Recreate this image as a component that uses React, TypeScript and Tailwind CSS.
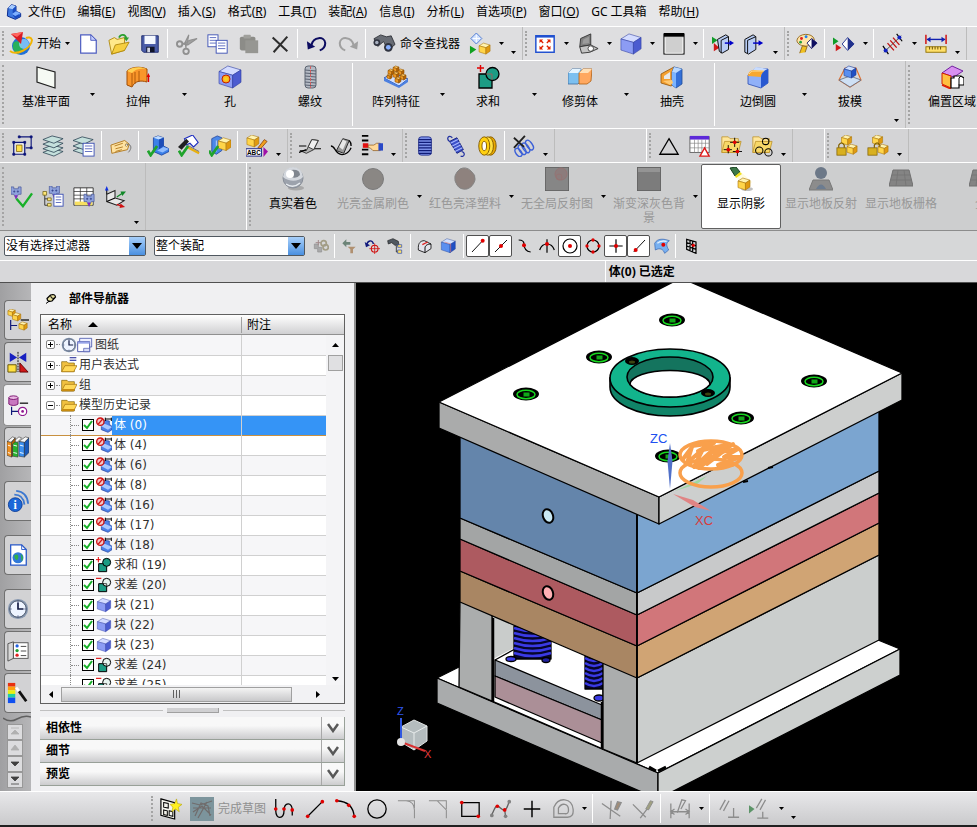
import type { ReactNode } from 'react';
import clsx from 'clsx';

/* ------------------------------- icon parts ------------------------------- */

function Cube({ x, y, s, c }: { x: number; y: number; s: number; c: 'blue' | 'gold' | 'violet' | 'orange' }) {
  const [top, front, side, line] = {
    blue: ['#cfe0ff', '#5a8ff0', '#1f4fc4', '#1c3c96'],
    gold: ['#fff3b0', '#ffd54a', '#e09a10', '#a87408'],
    violet: ['#d4dcff', '#8c9cf4', '#4c5cd0', '#2c3aa0'],
    orange: ['#ffc860', '#f09820', '#b86404', '#905000']
  }[c];
  const p = (pts: number[][]) => pts.map(([a, b]) => `${x + a * s},${y + b * s}`).join(' ');
  return (
    <g stroke={line} strokeWidth=".6" strokeLinejoin="round">
      <polygon fill={top} points={p([[0, .25], [.4, 0], [1, .18], [.62, .42]])} />
      <polygon fill={front} points={p([[0, .25], [.62, .42], [.62, 1], [0, .8]])} />
      <polygon fill={side} points={p([[.62, .42], [1, .18], [1, .74], [.62, 1]])} />
    </g>
  );
}

const Tick = ({ x = 0, y = 0 }: { x?: number; y?: number }) => (
  <path d={`M${x} ${y + 5}l3 5 7-10`} fill="none" stroke="#1fa32c" strokeWidth="3" />
);

const Dot = ({ x, y, r = 2 }: { x: number; y: number; r?: number }) => <circle cx={x} cy={y} r={r} fill="#e00000" />;

const Folder = () => (
  <g stroke="#b88c20" strokeWidth=".8">
    <path d="M2 2h7l2 2h9v15H2z" fill="#ffe69a" />
    <path d="M2 19l3-12h18l-3 12z" fill="#f8d868" />
  </g>
);

const Robot = ({ x, y }: { x: number; y: number }) => (
  <g transform={`translate(${x} ${y})`} stroke="#4c5a9c" strokeWidth=".8">
    <path d="M0 0h3v2h5V0h3v8H8l-2.500 5L3 8H0z" fill="#8fa2dc" />
    <circle cx="3.500" cy="5" r=".8" fill="#203080" />
    <circle cx="7.500" cy="5" r=".8" fill="#203080" />
    <path d="M4 9l1.500 5L7 9z" fill="#8a20c0" stroke="none" />
  </g>
);

const Page = ({ x, y, w = 9, h = 12 }: { x: number; y: number; w?: number; h?: number }) => (
  <g>
    <rect x={x} y={y} width={w} height={h} fill="#fff" stroke="#3c50b4" />
    <path d={`M${x + 2} ${y + 3}h${w - 4}m-${w - 4} 3h${w - 4}m-${w - 4} 3h${w - 4}`} stroke="#5868c0" />
  </g>
);

const stroke = { fill: 'none', stroke: '#000', strokeWidth: 1.4 };
const pale = { fill: 'none', stroke: '#8c8c8c', strokeWidth: 1.4 };

const ICONS: Record<string, ReactNode> = {
  nx: <><path d="M3 6l5-5 7 2v8l7 3v5l-8 4-12-5z" fill="#3d78e0" stroke="#0c2c90" strokeWidth="1.500" /><path d="M3 6l5-5 7 2-5 5z" fill="#a8ccff" /><path d="M10 8v8l4 6 8-4-7-7V3z" fill="#1a4cc0" /><path d="M9 15l6-4 7 3-8 4z" fill="#7eb0ff" /></>,
  start: <><circle cx="12" cy="14" r="9" fill="#2070d8" /><path d="M5 10c4-2 6 0 8 3s-1 7-4 9c-4-2-7-7-4-12z" fill="#28b05c" /><circle cx="15" cy="12" r="5" fill="#8ed0ff" opacity=".8" /><path d="M1 19c6 5 21-2 22-11-1-3-4-3-6-2" fill="none" stroke="#f2b400" strokeWidth="2" /><path d="M2 2l12-2-2 12z" fill="#d81c24" /><path d="M2 2l12-2-6 5z" fill="#ff6860" /></>,
  new: <><path d="M4 2h11l6 6v14H4z" fill="#fff" stroke="#4c5cc0" strokeWidth="1.3" /><path d="M15 2v6h6z" fill="#c8d0ff" stroke="#4c5cc0" /></>,
  open: <><path d="M1 8l6-3 3 2 8-2v14L4 23z" fill="#ffe98a" stroke="#b08a10" /><path d="M4 23l4-10 15-3-5 9z" fill="#f6cf40" stroke="#b08a10" /><path d="M12 5c2-4 7-4 8 1" fill="none" stroke="#2ca030" strokeWidth="2" /><path d="M17 5h6l-3 4z" fill="#2ca030" /></>,
  save: <><path d="M3 3h18v18H5l-2-2z" fill="#4a5ca8" stroke="#1c2a6c" /><path d="M6 3h12v9H6z" fill="#f4f8ff" /><path d="M8 15h9v6H8z" fill="#101428" /><path d="M9 16h3v5H9z" fill="#d0d4e4" /></>,
  cut: <g fill="none" stroke="#909090" strokeWidth="2"><path d="M7 12l6 1 10-7-8 2zM12 12l2-10-4 8 1 8" fill="#a0a0a0" strokeWidth="1.200" /><circle cx="4" cy="12" r="3" /><circle cx="11" cy="20" r="3" /></g>,
  copy: <><Page x={1} y={2} w={11} h={13} /><Page x={10} y={8} w={12} h={14} /></>,
  paste: <><rect x="2" y="4" width="17" height="15" rx="2" fill="#8c8c88" /><rect x="6" y="2" width="8" height="4" rx="1" fill="#a0a09c" /><path d="M8 8h14v14H8z" fill="#969692" /></>,
  del: <path d="M4 5l16 15M20 4L5 21" fill="none" stroke="#2c2c2c" strokeWidth="2.2" />,
  undo: <><path d="M6 13C8 4 20 3 21 11c0 5-3 7-6 8" fill="none" stroke="#0c0c60" strokeWidth="2.2" /><path d="M1 9l1 9 8-3z" fill="#0c0c60" /></>,
  redo: <><path d="M18 13C16 4 4 3 3 11c0 5 3 7 6 8" fill="none" stroke="#a0a0a0" strokeWidth="2.2" /><path d="M23 9l-1 9-8-3z" fill="#a0a0a0" /></>,
  find: <><path d="M1 7l7-4 6 2 5-1 4 9-7 6-5-9-6 5z" fill="#686c74" stroke="#202228" strokeWidth=".8" /><circle cx="4" cy="11" r="3.500" fill="#303440" /><circle cx="16" cy="16" r="4.500" fill="#303440" /><circle cx="16" cy="16" r="2.500" fill="#88b0ff" /><circle cx="4" cy="11" r="1.800" fill="#a8b0c0" /></>,
  play: <><path d="M8 0l6 6-6 6-6-6z" fill="#cfe0ff" stroke="#4c78d0" /><path d="M8 2v8M4 6h8" stroke="#fff" /><path d="M1 14l7 4-7 5z" fill="#10a020" /><Cube x={11} y={11} s={12} c="gold" /></>,
  fit: <><rect x="2" y="3" width="20" height="18" fill="#fff" stroke="#2050d0" strokeWidth="1.6" /><path d="M2 3h20v2H2z" fill="#2050d0" /><path d="M10 11L7 8m7 3l3-3m-7 6l-3 3m7-3l3 3" stroke="#e02000" strokeWidth="1.5" /><path d="M6 7h4L6 11zm12 0h-4l4 4zM6 18h4l-4-4zm12 0h-4l4-4z" fill="#e02000" /></>,
  laptop: <><path d="M3 15L4 6l11-5v12z" fill="#808080" stroke="#333" /><path d="M6 12l1-5 6-3v7z" fill="#9c9c9c" /><path d="M3 15l12-2 8 4-9 4-9 1z" fill="#c4c4c4" stroke="#333" /><circle cx="15" cy="17" r="3" fill="#fff" stroke="#444" /></>,
  cube: <Cube x={1} y={1} s={22} c="violet" />,
  cubeB: <Cube x={2} y={2} s={20} c="violet" />,
  window: <><rect x="1" y="1" width="22" height="22" fill="#cfcfcf" stroke="#000" /><path d="M1 0h22v4H1z" /><path d="M2.500 5v17h19V5" fill="none" stroke="#f4f4f4" /></>,
  clipA: <><path d="M0 4l6 4-6 4z" fill="#109c28" /><path d="M2 11l6 5-6 4z" fill="#d01818" /><path d="M6 7l9-5 3 2v14l-7 4-3-2z" fill="#b8ccf4" stroke="#000" /><path d="M10 8v14M10 8l8-4" stroke="#000" /><path d="M14 11h6" stroke="#0000c8" strokeWidth="1.6" /><path d="M19 8l5 3-5 3z" fill="#0000c8" /></>,
  clipB: <><path d="M2 7l9-5 3 2v14l-8 5-4-2z" fill="#b8ccf4" stroke="#000" /><path d="M5 8v14M5 8l9-4" stroke="#000" /><path d="M11 11h8" stroke="#0000c8" strokeWidth="1.6" /><path d="M17 8l5 3-5 3z" fill="#0000c8" /></>,
  paint: <><path d="M1 8c1-8 17-9 19-1 0 5-5 3-6 6s-13 1-13-5z" fill="#ffe4a8" stroke="#906820" /><circle cx="6" cy="6" r="1.6" fill="#e02020" /><circle cx="11" cy="4" r="1.6" fill="#2080f0" /><circle cx="5" cy="10" r="1.5" fill="#20a040" /><path d="M4 22l3-8 5 1-2 6" fill="#f0c020" stroke="#906820" /><path d="M12 11l5-5 6 5-6 6z" fill="#fff" stroke="#101060" /><path d="M17 6l6 5-6 6z" fill="#101060" /></>,
  reveal: <><path d="M0 5l6 4-6 4z" fill="#109c28" /><path d="M3 12l6 4-6 4z" fill="#d01818" /><path d="M10 12l6-7 7 7-7 7z" fill="#fff" stroke="#20308c" /><path d="M16 5l7 7-7 7z" fill="#20308c" /></>,
  dims: <><path d="M2 21L21 3" stroke="#404040" /><path d="M6 11l7 8M9 8l7 8M12 5l7 8" stroke="#c01010" strokeWidth="1.4" /><path d="M1 14l6 9M16 1l6 8" stroke="#000" strokeWidth="1.3" /><circle cx="4" cy="19" r="2.2" fill="#1020c0" /><circle cx="19" cy="5" r="2.2" fill="#1020c0" /></>,
  ruler: <><path d="M1 2v10M23 2v10" stroke="#d01010" strokeWidth="1.6" /><path d="M2 7h20" stroke="#1020b0" strokeWidth="1.5" /><path d="M2 7l4-3v6zm20 0l-4-3v6z" fill="#1020b0" /><rect x="1" y="15" width="22" height="6" fill="#ffe06a" stroke="#907000" /><path d="M5 15v3m3-3v3m3-3v3m3-3v3m3-3v3" stroke="#604800" /></>,

  plane: <path d="M3 2l18 5v16L3 17z" fill="#f6faf4" stroke="#202020" strokeWidth="1.2" />,
  extrude: <><path d="M1 6c4-4 13-5 20-2v13c-7-2-12-1-15 5L1 20z" fill="#f9962a" stroke="#a04c04" /><path d="M1 6c4-4 13-5 20-2-7-1-12 0-15 4z" fill="#ffd050" /><path d="M6 8v13M9 7v12m4-13v11" stroke="#a04c04" strokeWidth=".8" /><path d="M22.500 17v-7" stroke="#e00000" strokeWidth="1.4" /><path d="M20.500 12l2-4 1.500 4z" fill="#e00000" /></>,
  hole: <><Cube x={1} y={1} s={22} c="violet" /><circle cx="8" cy="14" r="4" fill="#ffb020" stroke="#c02000" /><circle cx="8" cy="14" r="2" fill="#f8d020" /></>,
  thread: <><rect x="7" y="1" width="11" height="22" rx="3" fill="#b4bac4" stroke="#5c6470" /><path d="M7 5l11 1M7 8l11 1M7 11l11 1M7 14l11 1M7 17l11 1M7 20l11 1" stroke="#505868" strokeWidth=".9" /><path d="M12.500 1v22" stroke="#d06060" strokeDasharray="3 1" /></>,
  pattern: <><path d="M0 13l9-5 15 6-9 7z" fill="#d0e0ff" stroke="#2c58b8" /><path d="M0 13l15 8 9-7v3l-9 6L0 16z" fill="#4c80e0" /><Cube x={9} y={1} s={6} c="orange" /><Cube x={4} y={4} s={6} c="orange" /><Cube x={14} y={4} s={6} c="orange" /><Cube x={9} y={7} s={6} c="orange" /><Cube x={16} y={9} s={6} c="orange" /><Cube x={3} y={9} s={5} c="orange" /><Cube x={11} y={12} s={6} c="orange" /></>,
  unite: <><path d="M3 9h13v14H3z" fill="#1c9c84" stroke="#000" strokeWidth="1.3" /><circle cx="16.500" cy="9" r="6.500" fill="#1c9c84" stroke="#000" strokeWidth="1.3" /><path d="M10 9h6v6" stroke="#b05858" fill="none" strokeWidth=".8" /><path d="M1 3h7M4.500 0v7" stroke="#e00000" strokeWidth="1.4" /></>,
  trim: <><path d="M0 8l4-4h9v12l-3 3H0z" fill="#7cc0f0" stroke="#3c6ca0" strokeWidth=".8" /><path d="M0 8l4-4h9l-3 4z" fill="#e4f4ff" /><path d="M11 8l4-4h9l-1 12-4 3h-8z" fill="#ffa860" stroke="#b06010" strokeWidth=".8" /><path d="M11 8l4-4h9l-4 4z" fill="#ffe0b8" /></>,
  shell: <><path d="M1 9l13-7 3 2v13l-6 4-10-3z" fill="#f4a030" stroke="#945408" strokeWidth=".8" /><path d="M14 2l8 2v15l-6 4-4-3V7z" fill="#3470d8" stroke="#204c98" strokeWidth=".8" /><path d="M12 7l4 1v15l-4-3z" fill="#7cb4ff" /><path d="M14 2l8 2-6 4-4-1z" fill="#b8d8ff" /><path d="M4 11l6-4v7H4z" fill="#e8e8e8" /><path d="M3 16l9-1 1 3-3 2z" fill="#ffc870" /></>,
  blend: <><path d="M2 10l8-7 12 1v14l-7 5-13-4z" fill="#90b0f8" stroke="#2c4cb0" strokeWidth=".8" /><path d="M10 2l12 2-5 3-11-1z" fill="#c8dcff" /><path d="M2 11c0-3 2-6 6-6l12 1c-3 1-5 3-5 6z" fill="#f8a830" /><path d="M3 9c1-2 3-3 5-3h10" fill="none" stroke="#ffe098" /><path d="M15 12c0-3 3-7 7-8v14l-7 5z" fill="#2858d0" /></>,
  draft: <><path d="M1 15L7 3h11l5 12-11 7z" fill="none" stroke="#e07030" strokeWidth="1.2" /><path d="M1 15l11-4 11 4-11 7z" fill="#cfe0f4" stroke="#606c80" strokeWidth=".8" /><Cube x={6} y={1} s={12} c="blue" /></>,
  offset: <><path d="M2 8l10-7 11 5-9 6z" fill="#d890f0" stroke="#7020a0" /><path d="M2 8l9 3v12l-9-4z" fill="#ffc040" stroke="#d02000" /><path d="M2 20l9 4" stroke="#e02000" strokeWidth="1.500" /><path d="M14 11h7l3 2v7h-5v3h-8V13h3z" fill="#fff" stroke="#000" strokeWidth="1.200" /><path d="M19 20v-7l2-2" stroke="#000" fill="none" /></>,

  frame: <><path d="M9 2h13v12h-6" fill="none" stroke="#0c1478" strokeWidth="1.2" /><path d="M3 8h12v13H3z" fill="#e4e4e4" stroke="#0c1478" strokeWidth="1.3" /><path d="M6 11h6v7H6z" fill="#ffe048" stroke="#806000" strokeWidth=".8" /><path d="M2 7h2v2H2zm12 0h2v2h-2zM2 20h2v2H2zm12 0h2v2h-2zM21 1h2v2h-2zM8 1h2v2H8zm13 12h2v2h-2z" fill="#0c1478" stroke="#0c1478" /></>,
  layers: <g stroke="#304858" strokeWidth=".9" fill="#c4e0dc"><path d="M1 19l10-4 12 3-10 5z" /><path d="M1 15l10-4 12 3-10 5z" /><path d="M1 10l10-4 12 3-10 5z" /><path d="M1 5l10-4 12 3-10 5z" /></g>,
  layerList: <><g stroke="#304858" strokeWidth=".9" fill="#c4e0dc"><path d="M0 17l10-4 12 3-10 5z" /><path d="M0 12l10-4 12 3-10 5z" /><path d="M0 6l10-4 12 3-10 5z" /></g><Page x={11} y={9} w={12} h={14} /></>,
  tag: <><path d="M1 11l15-5 5 4-2 6-17 4z" fill="#ffe2a0" stroke="#b07820" /><path d="M5 12l9-3m-8 6l8-2m-8 5l7-2" stroke="#b07820" /><circle cx="18" cy="11" r="1.300" fill="#fff" stroke="#806020" strokeWidth=".7" /><path d="M18 10c6 0 6 5 2 9" fill="none" stroke="#707070" /></>,
  checkA: <><path d="M7 3l5-2 6 2v9l6 3v3l-8 4-9-4z" fill="#3c80e8" stroke="#103898" strokeWidth=".8" /><path d="M7 3l5-2 6 2-5 2z" fill="#c0dcff" /><path d="M13 5l5-2v9l-5 4z" fill="#1c4cb8" /><path d="M11 17l7-4 6 2-7 4z" fill="#90bcff" /><Tick x={1} y={12} /></>,
  checkB: <><path d="M7 4l9-4 6 8-5 5-4-4-4 2z" fill="#fff" stroke="#1c2cc0" strokeWidth="1.2" /><path d="M0 13l9-9 3 3-8 9z" fill="#202020" /><path d="M10 13l13 7" stroke="#e8b010" strokeWidth="2.500" /><path d="M10 11l13 7" stroke="#707070" /><Tick x={1} y={12} /></>,
  checkC: <><path d="M3 4l6-3 5 2v14l-6 4-5-3z" fill="#4c88e8" stroke="#183c98" strokeWidth=".8" /><path d="M8 6v12" stroke="#c0d8ff" /><Cube x={10} y={3} s={14} c="gold" /><Tick x={0} y={12} /></>,
  note: <><Cube x={1} y={0} s={13} c="gold" /><path d="M13 14l7-9 3 2-7 8z" fill="#f0a020" stroke="#803808" strokeWidth=".8" /><rect x="0" y="15" width="17" height="8" fill="#fff" stroke="#101880" /><text x="1" y="22" fontSize="7" fontWeight="700" fontFamily="Liberation Sans, sans-serif">ABC</text><path d="M19 13l5 5-5 6z" fill="#a010a8" /></>,
  sheetA: <><path d="M1 17h7l6-12 7 1-5 10-8 4z" fill="#b4b4b4" stroke="#303030" /><path d="M0 12h8m8 3h8M0 19l8-3" stroke="#000" strokeWidth="1.3" /><path d="M14 5l-4 8 6 3 5-10z" fill="#f0f0f0" stroke="#303030" /></>,
  sheetB: <><path d="M7 17l7-13 7 2-6 14z" fill="#989898" stroke="#202020" /><path d="M10 13l4-8 4 2-4 9z" fill="#e8e8e8" /><path d="M1 12c4 0 4 5 8 8s11 1 14-6M21 6c2 2 2 4 2 6" {...stroke} /></>,
  point: <><path d="M1 1h7M1 6h7M1 16h7M1 21h7" stroke="#000" strokeWidth="2" /><path d="M2 9h6v5H2z" fill="#e01010" /><path d="M8 11h6l3-2h4v8h-8l-3-3H8z" fill="#ffd898" stroke="#905c20" strokeWidth=".8" /><path d="M19 9h5v8h-5z" fill="#2848c8" /></>,
  coil: <><rect x="5" y="2" width="14" height="20" rx="3" fill="#7c90e8" stroke="#101c78" strokeWidth=".8" /><path d="M5 5h14M5 8h14M5 11h14M5 14h14M5 17h14M5 20h14" stroke="#101c78" strokeWidth="1.3" /></>,
  spring: <><path d="M5 7l8-4 7 13-7 4z" fill="#3c50c8" stroke="#101c78" /><path d="M6 9l8-4M8 12l8-4M9 15l8-4M11 18l8-4" stroke="#a8b8ff" strokeWidth="1.2" /><path d="M5 7C1 4 4-1 8 3M18 18c5 1 3 7-1 5" fill="none" stroke="#2030a0" strokeWidth="1.3" /></>,
  disc: <><ellipse cx="16" cy="12" rx="6" ry="10" fill="#e8a800" stroke="#805800" /><ellipse cx="13" cy="12" rx="6" ry="10" fill="#ffe040" stroke="#805800" /><ellipse cx="9" cy="12" rx="6" ry="10" fill="#ffd010" stroke="#805800" /><ellipse cx="9" cy="12" rx="2.500" ry="5" fill="#fff" stroke="#805800" /></>,
  springX: <><g fill="none" stroke="#3c60d8" strokeWidth="1.5"><ellipse cx="6" cy="19" rx="3" ry="5" transform="rotate(-35 6 19)" /><ellipse cx="10" cy="16" rx="3" ry="6" transform="rotate(-35 10 16)" /><ellipse cx="14" cy="14" rx="3" ry="6" transform="rotate(-35 14 14)" /><ellipse cx="18" cy="11" rx="3" ry="6" transform="rotate(-35 18 11)" /></g><path d="M1 3l11 10M13 1L1 14" stroke="#202020" strokeWidth="2" /></>,
  triangle: <path d="M12 4l10 17H2z" {...stroke} />,
  table: <><rect x="1" y="2" width="21" height="17" fill="#fff" stroke="#606060" /><path d="M1 1h21v4H1z" fill="#5c28d8" /><path d="M1 9h21M1 14h21M6 5v14M10 5v14M14 5v14M18 5v14" stroke="#808080" strokeWidth=".7" /><path d="M17 14l5 9H12z" fill="#fff" stroke="#e01818" strokeWidth="1.5" /></>,
  folderPts: <><Folder /><path d="M16 3v10m-5-5h10M9 11v9m-5-4h9M19 14v9m-5-5h10" stroke="#000" /><Dot x={16} y={8} /><Dot x={9} y={16} /><Dot x={19} y={18} /></>,
  folderCir: <><Folder /><g {...stroke} strokeWidth={1.100}><circle cx="16" cy="7" r="3.500" /><circle cx="9" cy="17" r="4" /><circle cx="19" cy="19" r="4" /></g></>,
  lockA: <><Cube x={6} y={0} s={11} c="gold" /><Cube x={12} y={10} s={11} c="gold" /><rect x="1" y="14" width="10" height="8" fill="#d8b020" stroke="#806000" strokeWidth=".8" /><path d="M3 14v-3q3-5 6 0v3" fill="none" stroke="#806000" strokeWidth="1.3" /></>,
  lockB: <><Cube x={6} y={0} s={11} c="gold" /><Cube x={12} y={10} s={11} c="gold" /><rect x="1" y="14" width="10" height="8" fill="#d8b020" stroke="#806000" strokeWidth=".8" /><path d="M8 14v-3q3-5 6 0v2" fill="none" stroke="#806000" strokeWidth="1.3" /></>,

  robotOk: <><Robot x={0} y={1} /><path d="M6 14l7 8L23 8" fill="none" stroke="#18b028" strokeWidth="2.600" /></>,
  robotTree: <><path d="M3 9v12h5M3 14h5" fill="none" stroke="#303030" /><path d="M1 6h4v4H1zm5 7h4v3H6zm0 6h4v3H6z" fill="#ffe878" stroke="#605000" strokeWidth=".7" /><Robot x={8} y={0} /><Page x={13} y={9} w={10} h={13} /></>,
  robotTable: <><path d="M1 2h21v19H1z" fill="#fff" stroke="#303030" /><path d="M1 6h21M1 10h21M1 14h21M8 2v19M15 2v19" stroke="#303030" strokeWidth=".8" /><path d="M2 17h19v4H2z" fill="#f8e060" /><Robot x={12} y={9} /></>,
  axes: <><path d="M3 9l9-4v8l10 3-8 5-11-4z" fill="#e8e8e8" stroke="#202020" strokeWidth="1.100" /><path d="M3 17l9-4M3 9V4" {...stroke} strokeWidth={1.100} /><path d="M3 0l2 5H1z" fill="#1030e0" /><path d="M14 12l6-4" stroke="#108828" strokeWidth="1.4" /><path d="M18 6h6l-4 5z" fill="#108828" /><path d="M14 20l5 2" stroke="#d01010" strokeWidth="1.4" /><path d="M18 19l5 4-6 1z" fill="#d01010" /></>,
  sphere: <><ellipse cx="15" cy="21" rx="8" ry="2.500" fill="#a8a8a8" /><circle cx="12" cy="11" r="10" fill="#9ca2ac" stroke="#888e98" /><path d="M2 10a10 10 0 0120 0c-5 5-14 5-20 0z" fill="#d4d8de" /><path d="M10 3q9-1 9 5-3 4-9 2z" fill="#80868f" /><circle cx="9" cy="7" r="4" fill="#fff" /><path d="M5 17q7 5 14-1" fill="none" stroke="#e8ecf0" strokeWidth="1.500" /></>,
  sphereOff: <circle cx="12" cy="12" r="10.500" fill="#8a8784" stroke="#7c7c7c" />,
  plasticOff: <path d="M7 2q6-3 11 2 5 4 4 9-2 7-8 9-7 1-10-4-3-4-2-9 1-4 5-7z" fill="#8e827e" stroke="#848484" />,
  reflectOff: <><path d="M0 0h24v24H0z" fill="#868686" stroke="#606060" strokeWidth="1.500" /><circle cx="16" cy="7" r="6" fill="#8c7c7c" stroke="#947474" /><circle cx="14" cy="10" r="3" fill="none" stroke="#947474" /></>,
  gradOff: <><path d="M0 0h24v24H0z" fill="#7c7c7c" stroke="#606060" strokeWidth="1.500" /><path d="M1 1h22v4H1z" fill="#949494" /></>,
  lamp: <><ellipse cx="18" cy="22" rx="6" ry="2" fill="#c0c0c0" /><path d="M7 9l5-4 11 10-7 8z" fill="#fffbe0" /><path d="M1 1l6-1 4 5-5 4z" fill="#3c7848" stroke="#184020" /><path d="M6 9l5-4 2 2-6 4z" fill="#f0e020" /><Cube x={9} y={11} s={12} c="gold" /></>,
  floorOff: <><path d="M4 13h16l4 10H0z" fill="#8c8c8c" stroke="#787878" /><circle cx="12" cy="6" r="6" fill="#6c7888" /><path d="M7 22q5-9 10 0" fill="#6c7c90" /></>,
  gridOff: <><path d="M4 3h16l4 16H0z" fill="#848484" stroke="#707070" /><path d="M3 8h18M2 13h20M9 3L7 19m8-16l2 16" stroke="#747474" strokeWidth=".8" /></>,

  chain: <g opacity=".6"><path d="M2 9h6v5h5v7H7v-5H2z" fill="#8c8c8c" stroke="#606060" /><path d="M8 3v8M4 7h8" stroke="#805858" strokeWidth="1.5" /><circle cx="16" cy="8" r="4" fill="none" stroke="#807850" strokeWidth="2.500" /><circle cx="19" cy="14" r="4" fill="none" stroke="#807850" strokeWidth="2.500" /></g>,
  filterOff: <><path d="M2 8l6-6v4h6v4H8v4z" fill="#6c8478" /><path d="M10 13h12l-4 4v6h-4v-6z" fill="#b09070" /></>,
  target: <><path d="M4 11C5 3 13 2 14 9" {...stroke} stroke="#10187c" strokeWidth={2.200} /><path d="M1 6l2 8 6-3z" fill="#10187c" /><circle cx="16" cy="16" r="5" fill="none" stroke="#d01010" strokeWidth="1.6" /><path d="M16 8v16M8 16h16" stroke="#d01010" strokeWidth="1.2" /></>,
  findTree: <><path d="M1 4l8-3 8 4 1 6-6 0-5-4-5 2z" fill="#505860" stroke="#202020" /><path d="M14 12v9h4" fill="none" stroke="#000" /><path d="M16 10h6v4h-6zm0 8h6v5h-6z" fill="#ffe060" stroke="#2848b8" /></>,
  faceA: <><path d="M2 14c0-6 3-10 9-10l10 5v7l-9 6-10-4z" fill="#e4e4ec" stroke="#202020" strokeWidth="1.4" /><path d="M12 22v-7c0-4 4-6 9-6" {...stroke} /><path d="M8 10l8-4" stroke="#e02020" strokeWidth="2" /></>,
  glassCube: <><Cube x={2} y={1} s={21} c="blue" /><path d="M7 6l9 3v12" fill="none" stroke="#e08080" /></>,
  snapEnd: <><path d="M3 21L19 4" {...stroke} /><Dot x={19} y={4} r={3} /></>,
  snapMid: <><path d="M3 21L21 3" {...stroke} /><Dot x={12} y={12} r={3} /></>,
  snapCtl: <><path d="M4 3c5 0 8 1 8 6s2 11 10 12" {...stroke} strokeWidth={1.800} /><Dot x={12} y={11} r={3} /></>,
  snapInt: <><path d="M12 2v20M1 18c4-12 18-12 22 0" {...stroke} strokeWidth={1.800} /><Dot x={12} y={9} r={3} /></>,
  snapArc: <><circle cx="12" cy="12" r="10.500" {...stroke} strokeWidth={1.800} /><Dot x={12} y={12} r={3} /></>,
  snapQuad: <><circle cx="12" cy="12" r="9" {...stroke} strokeWidth={1.800} /><Dot x={12} y={3} r={2.500} /><Dot x={12} y={21} r={2.500} /><Dot x={3} y={12} r={2.500} /><Dot x={21} y={12} r={2.500} /></>,
  snapPt: <><path d="M12 2v20M2 12h20" {...stroke} strokeWidth={1.800} /><Dot x={12} y={12} r={3} /></>,
  snapCrv: <><path d="M4 21L21 3" {...stroke} /><Dot x={7} y={18} r={3} /></>,
  snapFace: <><path d="M1 8c4-8 14-7 22-4-6 4-4 8-1 14l-6 5c-2-6-7-9-14-5z" fill="#78b0f0" stroke="#3060b0" /><path d="M5 8c4-4 9-4 14-3" stroke="#e0f0ff" strokeWidth="2" fill="none" /><Dot x={14} y={10} r={3} /></>,
  snapGrid: <><path d="M4 2l14 4v17L4 17zM9 3v16m4-14v16M4 7l14 5M4 12l14 5" {...stroke} strokeWidth={1.800} /><Dot x={14} y={11} r={2.500} /></>,

  asmNav: <><Cube x={1} y={0} s={8} c="gold" /><Cube x={6} y={4} s={9} c="gold" /><path d="M15 12h9" stroke="#000" strokeWidth="1.3" /><path d="M4 12v11M4 18h7" stroke="#101878" strokeWidth="1.3" /><Cube x={13} y={14} s={9} c="gold" /></>,
  constraint: <><path d="M3 2l8 5-8 5zM21 2l-8 5 8 5z" fill="#1820c0" /><path d="M12 1v22" stroke="#000" strokeDasharray="2 1" /><path d="M1 15h9v8H1z" fill="#ffe040" stroke="#605000" /><path d="M14 13l9 10h-9z" fill="#d01818" stroke="#600000" /></>,
  partNav: <><path d="M2 4v7c2 2 8 2 10 0V4" fill="#c878c0" stroke="#78106c" /><ellipse cx="7" cy="4" rx="5" ry="2" fill="#eab8e4" stroke="#78106c" /><path d="M14 10h9" stroke="#000" strokeWidth="1.3" /><path d="M5 14v9M5 19h7" stroke="#101878" strokeWidth="1.3" /><circle cx="17" cy="19" r="4.500" fill="#fff" stroke="#901890" strokeWidth="1.3" /><circle cx="17" cy="19" r="1.500" fill="#901890" /></>,
  books: <><g stroke="#303030" strokeWidth=".6"><path d="M0 6l6-5 3 1-5 5zM7 6l6-5 3 1-5 5zM13 6l7-5 4 1-5 5z" fill="#f8f8f8" /><path d="M0 6l5 1v16l-5-2z" fill="#f09020" /><path d="M6 6l6 1v16l-6-1z" fill="#28b030" /><path d="M13 6l6 1v16l-6-1z" fill="#3c90f0" /><path d="M5 7l4-5v4l-3 3v13l-1 1z" fill="#b86404" /><path d="M19 7l5-5v16l-5 5z" fill="#1858b8" /></g><path d="M1 10l3 1m3-1l4 1m3-1l4 1M1 18l3 1m3-1l4 1m3-1l4 1" stroke="#fff" /></>,
  info: <><circle cx="9" cy="16" r="7.500" fill="#1c68d8" stroke="#0c3c98" /><text x="7" y="21" fontSize="13" fontWeight="700" fill="#fff" fontFamily="Liberation Serif, serif">i</text><path d="M8 5q10 0 11 11M10 1q12 1 13 14" fill="none" stroke="#3c78d0" strokeWidth="2" /></>,
  web: <><path d="M4 1h12l5 5v17H4z" fill="#fff" stroke="#2858c8" strokeWidth="1.4" /><path d="M16 1v5h5" fill="none" stroke="#2858c8" /><circle cx="12" cy="15" r="6" fill="#3078d8" /><path d="M8 12c4-2 5 1 4 4s-4 1-4-4zm7-1c3 2 3 6 1 8z" fill="#30b048" /></>,
  clock: <><circle cx="12" cy="12" r="11" fill="#8898b0" /><circle cx="12" cy="12" r="9" fill="#eef4ff" stroke="#404c60" /><path d="M12 5v7h6" fill="none" stroke="#101840" strokeWidth="1.8" /><path d="M12 3v2m0 14v2M3 12h2m14 0h2" stroke="#405080" /></>,
  roles: <><path d="M1 4l6-2v18l-6 3z" fill="#d8d8d8" stroke="#505050" /><rect x="7" y="3" width="16" height="17" fill="#fff" stroke="#505050" /><circle cx="11" cy="6.500" r="1.800" fill="#2060e0" /><circle cx="11" cy="11.500" r="1.800" fill="#20a030" /><circle cx="11" cy="16.500" r="1.800" fill="#e02020" /><path d="M15 7h6m-6 5h6m-6 5h6" stroke="#404040" /></>,
  wand: <><path d="M1 1h8v4H1z" fill="#e83010" /><path d="M1 5h8v4H1z" fill="#ffa010" /><path d="M1 9h8v4H1z" fill="#e8f010" /><path d="M1 13h8v4H1z" fill="#20d0a0" /><path d="M1 17h8v6H1z" fill="#1050f0" /><path d="M13 10l8 11" stroke="#101010" strokeWidth="3" /><path d="M10 6l3 4" stroke="#fff" strokeWidth="3" /></>,

  drawing: <><path d="M4 2h18v13H4z" fill="#eef0ff" stroke="#4450a8" strokeWidth="1.2" /><path d="M1 7h18v15H1z" fill="#fff" stroke="#4450a8" strokeWidth="1.4" /><path d="M1 7h18v3H1z" fill="#98a4e8" /><path d="M10 17h9v5h-9z" fill="#d8dcf8" stroke="#4450a8" /></>,
  folder: <><path d="M1 5h8l2 2h9v14H1z" fill="#f0c040" stroke="#806000" /><path d="M1 21l5-10h18l-5 10z" fill="#ffd858" stroke="#a06c08" /><path d="M1 21h18l1-3H3z" fill="#c88c10" /></>,
  folderEq: <><path d="M1 7h8l2 2h9v13H1z" fill="#f0c040" stroke="#806000" /><path d="M1 22l5-9h18l-5 9z" fill="#ffd858" stroke="#a06c08" /><path d="M13 1h10M13 5h10" stroke="#101890" strokeWidth="1.600" /></>,
  body: <><path d="M8 14l4-4 1-5 7 1v5l4 3v5l-6 4-10-4z" fill="#4c80e8" stroke="#1c3c98" /><path d="M8 14l5-4 11 5-6 4z" fill="#a8c8ff" /><path d="M14 1v5m0-3h9m0-2v5" stroke="#000" fill="none" strokeWidth="1.500" /><circle cx="6.500" cy="7" r="5.500" fill="#f4c8c8" stroke="#d01414" strokeWidth="2" /><path d="M3 11l7-8" stroke="#d01414" strokeWidth="2" /></>,
  uniteS: <><path d="M4 10h12v12H4z" fill="#1c9c84" stroke="#000" strokeWidth="1.500" /><circle cx="16" cy="8" r="6" fill="#1c9c84" stroke="#000" strokeWidth="1.500" /><path d="M0 4h7M3.500 0v8" stroke="#e00000" strokeWidth="1.500" /></>,
  subtract: <><path d="M4 10h12v12H4z" fill="#1c9c84" stroke="#000" strokeWidth="1.500" /><circle cx="16" cy="8" r="6" fill="#e8f4f0" stroke="#000" strokeWidth="1.500" /><path d="M10 10h6v5" fill="none" stroke="#000" /><path d="M0 2h8" stroke="#e00000" strokeWidth="1.600" /></>,
  pin: <><path d="M4 11l7-7q9-3 10 4l-7 8q-9 3-10-5z" fill="#e8e0a0" stroke="#000" strokeWidth="2.500" /><path d="M2 21l7-5" stroke="#000" strokeWidth="2" /><path d="M11 5q0 7 8 6" stroke="#000" strokeWidth="2" fill="none" /></>,

  sketch: <><path d="M1 1l15 4v18L1 19z" fill="#f4f4ec" stroke="#000" strokeWidth="1.300" /><path d="M4 5l5 1v5l-5-1zM4 13l4 1v5l-4-1zM10 14l4 1v5l-4-1z" {...stroke} strokeWidth={1.100} /><path d="M18 1l1 5 5 1-4 3 1 5-4-3-4 3 1-5-3-3 5-1z" fill="#fff020" stroke="#b0a000" strokeWidth=".6" /></>,
  finish: <><path d="M0 0h24v24H0z" fill="#7c949c" /><path d="M2 6l8 2 12-4M3 15l9-6 9 9M5 19l6-13 7 3 2 10M3 11h18M8 21l9-16" fill="none" stroke="#706c6c" strokeWidth="1.200" /></>,
  profile: <><path d="M3 1v13c0 10 9 9 9 0 0-10 9-10 9-1v6" {...stroke} /><Dot x={3} y={12} /><Dot x={12} y={12} /><Dot x={21} y={13} /></>,
  line: <><path d="M3 21L20 4" {...stroke} /><Dot x={4} y={20} /><Dot x={20} y={4} /></>,
  arc: <><path d="M2 3q18 1 19 18" {...stroke} /><Dot x={2} y={3} /><Dot x={15} y={8} /><Dot x={21} y={20} /></>,
  circle: <circle cx="12" cy="12" r="10" {...stroke} />,
  fillet: <path d="M1 3h9q9 1 9 10v9M10 3h9v8" {...pale} strokeWidth={1.100} />,
  chamfer: <path d="M1 3h9l10 10v9M10 3h10v9" {...pale} strokeWidth={1.100} />,
  rect: <><path d="M3 5h19v15H3z" {...stroke} /><Dot x={3} y={5} /><Dot x={21} y={20} /></>,
  spline: <><path d="M2 18c3-5 3-9 6-9s5 5 8 4 3-5 5-9M16 13l1 7" {...stroke} stroke="#606060" /><circle cx="2" cy="19" r="2" fill="#808080" /><circle cx="21" cy="4" r="2" fill="#808080" /><circle cx="17" cy="20" r="2" fill="#808080" /><Dot x={8} y={9} /><Dot x={16} y={13} /></>,
  plus: <path d="M12 3v18M3 12h18" stroke="#000" strokeWidth="1.600" />,
  offsetCrv: <><path d="M2 21V10Q6 1 14 2t9 10-6 9H2z" {...pale} /><path d="M7 17v-6q3-5 7-4t4 6-4 4H7z" {...pale} /></>,
  trimCrv: <path d="M1 6l20 14M11 3l-1 20M15 12l3-8 4 1-4 8z" {...pale} fill="#a08c78" />,
  extendCrv: <><path d="M1 7l14 14M9 22l9-12" {...pale} /><path d="M15 12l5-9 3 1-5 9z" fill="#a0a080" stroke="#8c8c8c" /></>,
  dimension: <path d="M2 6v16M22 6v16M2 15h20M6 12l-4 3 4 3m12-6l4 3-4 3M9 16l5-14 4 1-5 9" {...pale} />,
  perp: <path d="M2 13L8 2m-2 12L12 3M11 21h12M17 11v10" {...pale} />,
  showPerp: <><path d="M0 8l6 4-6 5z" fill="#5c9468" /><path d="M8 11l6-10m-2 12l6-11M9 22h12M15 15v7" {...pale} /></>
};

function Icon({ name, size = 22 }: { name: string; size?: number }) {
  return (
    <svg width={size} height={size} viewBox="0 0 24 24" className="shrink-0" aria-hidden="true">
      {ICONS[name]}
    </svg>
  );
}

/* ----------------------------- toolbar pieces ----------------------------- */

function Caret() {
  return (
    <svg width="5" height="3" viewBox="0 0 5 3" className="shrink-0" aria-hidden="true">
      <path d="M0 0h5L2.500 3z" />
    </svg>
  );
}

function Tool({ icon, label }: { icon: string; label: string }) {
  return (
    <button type="button" aria-label={label} className="flex w-[31px] shrink-0 items-center justify-center">
      <Icon name={icon} />
    </button>
  );
}

function Drop({ label }: { label: string }) {
  return (
    <button type="button" aria-label={`${label} 选项`} className="flex w-3 shrink-0 items-center justify-center">
      <Caret />
    </button>
  );
}

function More() {
  return (
    <button type="button" aria-label="工具栏选项" className="flex w-3 shrink-0 items-end justify-center pb-1.5">
      <Caret />
    </button>
  );
}

const Sep = () => <span className="my-0.5 ml-0.5 mr-[3px] w-px shrink-0 bg-white" />;
const Edge = () => <span className="w-1 shrink-0 border-r border-[#bcbcbc]" />;
const Grip = () => <span className="my-1 ml-0.5 mr-0.5 w-0.5 shrink-0 border-l-2 border-dotted border-[#a4a4a4]" />;

function BigTool({ icon, label, off, on }: { icon: string; label: string; off?: boolean; on?: boolean }) {
  return (
    <button
      type="button"
      disabled={off}
      aria-pressed={on}
      className={clsx(
        'flex w-20 shrink-0 flex-col items-center gap-1.5 rounded-xs',
        on ? 'my-px border border-[#606060] bg-white pt-0.5' : 'pt-1',
        off && 'text-[#989898]'
      )}
    >
      <Icon name={icon} size={24} />
      <span className="max-w-[76px] leading-[14px]">{label}</span>
    </button>
  );
}

function BigDrop({ label }: { label: string }) {
  return (
    <button type="button" aria-label={`${label} 选项`} className="flex w-3 shrink-0 justify-center pt-8">
      <Caret />
    </button>
  );
}

const ROW = 'flex shrink-0 items-stretch overflow-hidden border-t border-white';

const MENUS: [string, string?][] = [
  ['文件', 'F'], ['编辑', 'E'], ['视图', 'V'], ['插入', 'S'], ['格式', 'R'], ['工具', 'T'], ['装配', 'A'],
  ['信息', 'I'], ['分析', 'L'], ['首选项', 'P'], ['窗口', 'O'], ['GC 工具箱'], ['帮助', 'H']
];

function MenuBar() {
  return (
    <nav className="flex h-[26px] shrink-0 items-center gap-3 bg-[#e6e6e8] pb-0.5 pl-1.5" aria-label="主菜单">
      <span className="-mr-1.5"><Icon name="nx" size={16} /></span>
      {MENUS.map(([text, key]) => (
        <button key={text} type="button" className="whitespace-nowrap">
          {text}{key && <>(<u>{key}</u>)</>}
        </button>
      ))}
    </nav>
  );
}

function StandardBar() {
  return (
    <div className={clsx(ROW, 'h-[34px] bg-[#dedee0]')}>
      <Grip />
      <button type="button" className="flex w-[66px] shrink-0 items-center gap-1 pl-[3px]">
        <Icon name="start" size={24} />
        <span>开始</span>
        <Caret />
      </button>
      <Tool icon="new" label="新建" />
      <Tool icon="open" label="打开" />
      <Tool icon="save" label="保存" />
      <Sep />
      <Tool icon="cut" label="剪切" />
      <Tool icon="copy" label="复制" />
      <Tool icon="paste" label="粘贴" />
      <Tool icon="del" label="删除" />
      <Sep />
      <Tool icon="undo" label="撤消" />
      <Tool icon="redo" label="重做" />
      <Sep />
      <button type="button" className="flex w-[95px] shrink-0 items-center gap-1 pl-1">
        <Icon name="find" size={23} />
        <span className="whitespace-nowrap">命令查找器</span>
      </button>
      <Tool icon="play" label="重复命令" />
      <Drop label="重复命令" />
      <More />
      <Edge />
      <Grip />
      <Tool icon="fit" label="适合窗口" />
      <Drop label="适合窗口" />
      <Tool icon="laptop" label="定向视图" />
      <Drop label="定向视图" />
      <Tool icon="cube" label="渲染样式" />
      <Drop label="渲染样式" />
      <Tool icon="window" label="背景" />
      <Drop label="背景" />
      <Sep />
      <Tool icon="clipA" label="剪切截面" />
      <Tool icon="clipB" label="编辑截面" />
      <More />
      <Edge />
      <Grip />
      <Tool icon="paint" label="编辑对象显示" />
      <Sep />
      <Tool icon="reveal" label="显示和隐藏" />
      <Drop label="显示和隐藏" />
      <Sep />
      <Tool icon="dims" label="测量" />
      <Drop label="测量" />
      <Tool icon="ruler" label="测量距离" />
      <More />
      <Edge />
    </div>
  );
}

function FeatureBar() {
  return (
    <div className={clsx(ROW, 'h-[68px] bg-[#d8d8da]')}>
      <Grip />
      <BigTool icon="plane" label="基准平面" />
      <BigDrop label="基准平面" />
      <BigTool icon="extrude" label="拉伸" />
      <BigDrop label="拉伸" />
      <BigTool icon="hole" label="孔" />
      <BigTool icon="thread" label="螺纹" />
      <Sep />
      <BigTool icon="pattern" label="阵列特征" />
      <BigDrop label="阵列特征" />
      <BigTool icon="unite" label="求和" />
      <BigDrop label="求和" />
      <BigTool icon="trim" label="修剪体" />
      <BigDrop label="修剪体" />
      <BigTool icon="shell" label="抽壳" />
      <Sep />
      <BigTool icon="blend" label="边倒圆" />
      <BigDrop label="边倒圆" />
      <BigTool icon="draft" label="拔模" />
      <More />
      <Edge />
      <Grip />
      <BigTool icon="offset" label="偏置区域" />
    </div>
  );
}

function UtilityBar() {
  return (
    <div className={clsx(ROW, 'h-[34px] bg-[#d4d4d6]')}>
      <Grip />
      <Tool icon="frame" label="图层设置" />
      <Tool icon="layers" label="图层" />
      <Tool icon="layerList" label="图层视图" />
      <Sep />
      <Tool icon="tag" label="标签" />
      <Sep />
      <Tool icon="checkA" label="检查体" />
      <Tool icon="checkB" label="检查标注" />
      <Tool icon="checkC" label="检查装配" />
      <Sep />
      <Tool icon="note" label="注释" />
      <More />
      <Edge />
      <Grip />
      <Tool icon="sheetA" label="钣金" />
      <Tool icon="sheetB" label="曲面" />
      <Tool icon="point" label="指定" />
      <More />
      <Edge />
      <Grip />
      <Tool icon="coil" label="圆柱压缩弹簧" />
      <Tool icon="spring" label="圆柱拉伸弹簧" />
      <Tool icon="disc" label="碟簧" />
      <Sep />
      <Tool icon="springX" label="删除弹簧" />
      <More />
      <Edge />
      <span className="w-[92px] shrink-0 border-r border-white" />
      <Grip />
      <Tool icon="triangle" label="三角形" />
      <Tool icon="table" label="表格" />
      <Tool icon="folderPts" label="点集" />
      <Tool icon="folderCir" label="圆集" />
      <More />
      <Edge />
      <span className="w-[32px] shrink-0 border-r border-white" />
      <Grip />
      <Tool icon="lockA" label="锁定" />
      <Tool icon="lockB" label="解锁" />
      <More />
      <Edge />
    </div>
  );
}

function ShadingBar() {
  return (
    <div className={clsx(ROW, 'h-[69px] border-b border-b-[#8c8c8c] bg-[#cdcecf]')}>
      <Grip />
      <Tool icon="robotOk" label="检查" />
      <Tool icon="robotTree" label="检查树" />
      <Tool icon="robotTable" label="检查表" />
      <Tool icon="axes" label="坐标系" />
      <More />
      <Edge />
      <span className="w-[101px] shrink-0 border-r border-white" />
      <Grip />
      <BigTool icon="sphere" label="真实着色" />
      <BigTool icon="sphereOff" label="光亮金属刷色" off />
      <BigDrop label="光亮金属刷色" />
      <BigTool icon="plasticOff" label="红色亮泽塑料" off />
      <BigDrop label="红色亮泽塑料" />
      <BigTool icon="reflectOff" label="无全局反射图" off />
      <BigDrop label="无全局反射图" />
      <BigTool icon="gradOff" label="渐变深灰色背景" off />
      <BigDrop label="渐变深灰色背景" />
      <BigTool icon="lamp" label="显示阴影" on />
      <BigTool icon="floorOff" label="显示地板反射" off />
      <BigTool icon="gridOff" label="显示地板栅格" off />
      <BigTool icon="gridOff" label="全" off />
    </div>
  );
}

function Combo({ label, options, className }: { label: string; options: string[]; className: string }) {
  return (
    <div className={clsx('relative h-5', className)}>
      <select
        aria-label={label}
        className="h-5 w-full appearance-none rounded-xs border border-[#505860] bg-white pl-px pr-5"
      >
        {options.map(o => <option key={o}>{o}</option>)}
      </select>
      <span className="pointer-events-none absolute right-px top-px flex h-[18px] w-4 items-center justify-center bg-linear-to-b from-[#a8d0fa] to-[#4a90e0]">
        <svg width="10" height="6" viewBox="0 0 10 6" aria-hidden="true"><path d="M0 0h10L5 6z" /></svg>
      </span>
    </div>
  );
}

function Snap({ icon, label, on }: { icon: string; label: string; on?: boolean }) {
  return (
    <button
      type="button"
      aria-label={label}
      aria-pressed={!!on}
      className={clsx(
        'flex h-[22px] w-[23px] shrink-0 items-center justify-center rounded-xs',
        on && 'border border-[#505050] bg-white'
      )}
    >
      <Icon name={icon} size={16} />
    </button>
  );
}

function SelectionBar() {
  return (
    <div className="flex h-[30px] shrink-0 items-center border-b border-white bg-[#d6d7d8]">
      <div className="flex w-[305px] shrink-0 gap-2 pl-1">
        <Combo label="类型过滤器" options={['没有选择过滤器', '实体', '面', '边']} className="w-[142px]" />
        <Combo label="选择范围" options={['整个装配', '仅在工作部件内']} className="flex-1" />
      </div>
      <div className="flex h-full items-center pl-1">
        <Snap icon="chain" label="关联" />
        <span className="mx-0.5 h-6 w-px bg-white" />
        <Snap icon="filterOff" label="过滤器" />
        <Snap icon="target" label="重置" />
        <Snap icon="findTree" label="在导航器中查找" />
        <span className="ml-1 mr-0.5 h-6 w-px bg-white" />
        <Snap icon="faceA" label="面选择" />
        <Snap icon="glassCube" label="透视" />
        <span className="ml-1 mr-0.5 h-6 w-px bg-white" />
        <Snap icon="snapEnd" label="端点" on />
        <Snap icon="snapMid" label="中点" on />
        <Snap icon="snapCtl" label="控制点" />
        <Snap icon="snapInt" label="交点" />
        <Snap icon="snapArc" label="圆弧中心" on />
        <Snap icon="snapQuad" label="象限点" />
        <Snap icon="snapPt" label="现有点" on />
        <Snap icon="snapCrv" label="曲线上的点" on />
        <Snap icon="snapFace" label="面上的点" />
        <span className="ml-0.5 mr-1 h-6 w-px bg-white" />
        <Snap icon="snapGrid" label="栅格点" />
      </div>
    </div>
  );
}

/* ----------------------------- part navigator ----------------------------- */

const TABS: { icon: string; label: string; gap?: boolean; on?: boolean }[] = [
  { icon: 'asmNav', label: '装配导航器' },
  { icon: 'constraint', label: '约束导航器' },
  { icon: 'partNav', label: '部件导航器', on: true },
  { icon: 'books', label: '重用库' },
  { icon: 'info', label: 'HD3D 工具', gap: true },
  { icon: 'web', label: 'Web 浏览器', gap: true },
  { icon: 'clock', label: '历史记录', gap: true },
  { icon: 'roles', label: '角色' },
  { icon: 'wand', label: '系统材料' }
];

const SCROLLERS: [string, string, boolean][] = [
  ['最顶', 'M2 2h8M6 4l4 4H2z', true],
  ['向上', 'M6 3l4 5H2z', true],
  ['向下', 'M2 4h8L6 8z', false],
  ['最底', 'M2 3h8L6 7zM2 10h8', false]
];

function ResourceBar() {
  return (
    <aside className="flex w-[31px] shrink-0 flex-col items-end bg-linear-to-r from-[#a0a0a2] to-[#b6b6b8] pt-[17px]">
      {TABS.map(t => (
        <button
          key={t.label}
          type="button"
          aria-label={t.label}
          className={clsx(
            'flex items-center justify-center rounded-l-sm border border-r-0',
            t.on ? 'mb-px h-[42px] w-7 border-[#909090] bg-[#f0f0f2]' : 'mb-0.5 h-10 w-[27px] border-[#707070] bg-[#d2d2d4]',
            t.gap && 'mt-3'
          )}
        >
          <Icon name={t.icon} size={22} />
        </button>
      ))}
      <svg width="28" height="8" viewBox="0 0 28 8" className="mb-px" aria-hidden="true">
        <path d="M0 3q7 5 14 1t14-2" fill="none" stroke="#606060" strokeWidth="1.500" />
      </svg>
      <div className="mr-2 flex flex-col">
        {SCROLLERS.map(([label, d, off]) => (
          <button key={label} type="button" aria-label={label} disabled={off}
            className={clsx('flex h-4 w-4 items-center justify-center border border-[#989898] bg-[#dcdcde]', off ? 'text-[#b0b0b0]' : 'text-[#404040]')}>
            <svg width="12" height="12" viewBox="0 0 12 12" fill="currentColor" stroke="currentColor" strokeWidth=".8" aria-hidden="true"><path d={d} /></svg>
          </button>
        ))}
      </div>
    </aside>
  );
}

const GROUPS = [
  { icon: 'drawing', label: '图纸', open: false, clock: true },
  { icon: 'folderEq', label: '用户表达式', open: false },
  { icon: 'folder', label: '组', open: false },
  { icon: 'folder', label: '模型历史记录', open: true }
];

const FEATURES: [string, string, number][] = [
  ['body', '体', 0], ['body', '体', 4], ['body', '体', 6], ['body', '体', 8], ['body', '体', 16],
  ['body', '体', 17], ['body', '体', 18], ['uniteS', '求和', 19], ['subtract', '求差', 20],
  ['cubeB', '块', 21], ['cubeB', '块', 22], ['cubeB', '块', 23], ['subtract', '求差', 24], ['subtract', '求差', 25]
];

function TreeTable() {
  return (
    <table className="w-full table-fixed border-collapse text-left font-['DejaVu_Sans','Noto_Sans_CJK_SC',sans-serif] text-[#303030]">
      <colgroup>
        <col className="w-[200px]" />
        <col />
      </colgroup>
      <tbody>
        {GROUPS.map((g, i) => (
          <tr key={g.label} className={clsx('h-5 border-b border-[#d0d0d0]', i % 2 === 0 ? 'bg-[#f6f6f8]' : 'bg-white')}>
            <td className="border-r border-[#d0d0d0] p-0">
              <div className="flex h-[19px] items-center pl-[5px]">
                <button type="button" aria-label={`${g.open ? '折叠' : '展开'} ${g.label}`} aria-expanded={g.open}
                  className="flex h-[9px] w-[9px] items-center justify-center rounded-xs border border-[#888] bg-white">
                  <svg width="5" height="5" viewBox="0 0 5 5" aria-hidden="true">
                    <path d={g.open ? 'M0 2h5v1H0z' : 'M0 2h5v1H0zM2 0h1v5H2z'} />
                  </svg>
                </button>
                <span className="mx-px w-1 border-t border-dotted border-[#888]" />
                {g.clock && <Icon name="clock" size={16} />}
                <Icon name={g.icon} size={16} />
                <span className="ml-0.5 whitespace-nowrap">{g.label}</span>
              </div>
            </td>
            <td className="p-0" />
          </tr>
        ))}
        {FEATURES.map(([icon, label, n], i) => {
          const sel = i === 0;
          const id = `feature-${n}`;
          return (
            <tr key={id} aria-selected={sel} className={clsx('h-5 border-b', sel ? 'border-[#c89040]' : 'border-[#d0d0d0]', i % 2 === 0 ? 'bg-[#f6f6f8]' : 'bg-white')}>
              <td className="border-r border-[#d0d0d0] p-0">
                <div className="flex h-[19px] items-center pl-[29px]">
                  <span className="h-5 w-px border-l border-dotted border-[#888]" />
                  <span className="mr-[3px] w-2 border-t border-dotted border-[#888]" />
                  <span className="relative h-3 w-3 shrink-0">
                    <input id={id} type="checkbox" defaultChecked className="peer block h-3 w-3 appearance-none border border-black bg-white" />
                    <svg viewBox="0 0 12 12" className="pointer-events-none absolute inset-0 hidden h-3 w-3 peer-checked:block" aria-hidden="true">
                      <path d="M2 6l3 3 5-7" fill="none" stroke="#18b028" strokeWidth="2" />
                    </svg>
                  </span>
                  <span className="ml-0.5"><Icon name={icon} size={16} /></span>
                  <label htmlFor={id} className={clsx('flex-1 whitespace-nowrap pl-0.5 leading-[19px]', sel && 'bg-[#3594f6] text-white')}>
                    {label} ({n})
                  </label>
                </div>
              </td>
              <td className={clsx('p-0', sel && 'bg-[#3594f6]')} />
            </tr>
          );
        })}
      </tbody>
    </table>
  );
}

function Navigator() {
  return (
    <section className="flex w-[325px] shrink-0 flex-col border-r-2 border-[#909090] bg-[#f0f0f2] pl-[9px] pr-[9px]" aria-label="部件导航器">
      <h2 className="flex h-[31px] shrink-0 items-center gap-3 pl-[5px] font-bold">
        <Icon name="pin" size={12} />
        <span>部件导航器</span>
      </h2>
      <div className="flex min-h-0 flex-1 flex-col border border-[#606060] bg-[#f2f2f4]">
        <div className="flex h-5 shrink-0 items-center border-b border-[#909090] bg-linear-to-b from-white to-[#d0d0d2]">
          <span className="flex w-[200px] items-center gap-4 pl-[7px]">
            名称
            <svg width="10" height="5" viewBox="0 0 10 5" aria-hidden="true"><path d="M0 5l5-5 5 5z" /></svg>
          </span>
          <span className="flex-1 border-l border-[#a0a0a0] pl-[5px]">附注</span>
        </div>
        <div className="flex min-h-0 flex-1">
          <div className="min-w-0 flex-1 overflow-hidden"><TreeTable /></div>
          <div className="flex w-[18px] shrink-0 flex-col items-center bg-[#f4f4f6]">
            <svg width="7" height="4" viewBox="0 0 7 4" className="my-2 shrink-0" aria-hidden="true"><path d="M0 4l3.500-4L7 4z" /></svg>
            <span className="h-4 w-[15px] border border-[#a0a0a0] bg-[#e0e0e2]" />
            <svg width="7" height="4" viewBox="0 0 7 4" className="mb-1 mt-auto shrink-0" aria-hidden="true"><path d="M0 0h7L3.500 4z" /></svg>
          </div>
        </div>
        <div className="flex h-[18px] shrink-0 items-center gap-2 pl-2 pr-6">
          <svg width="4" height="7" viewBox="0 0 4 7" aria-hidden="true"><path d="M4 0v7L0 3.500z" /></svg>
          <span className="mr-4 flex h-[15px] flex-1 items-center justify-center gap-0.5 border border-[#a0a0a0] bg-linear-to-b from-[#f4f4f4] to-[#c8c8ca]">
            <i className="h-2 w-px bg-[#606060]" /><i className="h-2 w-px bg-[#606060]" /><i className="h-2 w-px bg-[#606060]" />
          </span>
          <svg width="4" height="7" viewBox="0 0 4 7" aria-hidden="true"><path d="M0 0v7l4-3.500z" /></svg>
        </div>
      </div>
      <div className="flex h-3 shrink-0 items-center gap-1">
        <span className="h-px flex-1 bg-[#c0c0c0]" />
        <span className="h-[5px] w-[52px] border-b border-r border-[#a0a0a0] bg-[#d0d0d2]" />
        <span className="h-px flex-1 bg-[#c0c0c0]" />
      </div>
      <div className="mb-[5px] flex shrink-0 flex-col pt-px">
        {['相依性', '细节', '预览'].map(t => (
          <button key={t} type="button" aria-expanded="false"
            className="flex h-[23px] items-stretch border-b border-r border-[#98a098] bg-linear-to-b from-[#f8f8f8] from-40% to-[#ccccce] text-left font-bold">
            <span className="flex flex-1 items-center pl-1.5">{t}</span>
            <span className="flex w-[23px] items-center justify-center border-l border-[#a8a8a8]">
              <svg width="12" height="10" viewBox="0 0 12 10" aria-hidden="true"><path d="M1 1l5 7 5-7" fill="none" stroke="#585858" strokeWidth="2.500" /></svg>
            </span>
          </button>
        ))}
      </div>
    </section>
  );
}

/* -------------------------------- viewport -------------------------------- */

const SCREWS = [[672, 320], [599, 357], [526, 394], [814, 381], [741, 418], [668, 456]];

function Coil({ x, w, y0, y1 }: { x: number; w: number; y0: number; y1: number }) {
  const turns = [];
  for (let y = y0; y <= y1; y += 5) turns.push(y);
  return (
    <g fill="none">
      <rect x={x} y={y0 - 4} width={w} height={y1 - y0 + 5} fill="#06062c" />
      {turns.map(y => <path key={y} d={`M${x} ${y - 2}q${w / 2} 6 ${w} 0`} stroke="#3a3ae4" strokeWidth="2.500" />)}
    </g>
  );
}

function MoldBase() {
  return (
    <svg viewBox="356 283 621 508" className="h-full w-full" role="img" aria-label="模架装配模型">
      <g stroke="#000" strokeWidth="1.3" strokeLinejoin="round">
        {/* bottom clamp plate */}
        <polygon fill="#fff" points="437,678 459,667 659,600 878,640 900,649 658,773" />
        <polygon fill="#a9abac" points="437,678 658,773 658,799 437,703" />
        <polygon fill="#cdd0cf" points="658,773 900,649 900,675 658,799" />
        {/* ejector pocket */}
        <polygon fill="#fff" points="492,612 603,660 603,749 492,701" />
        <polygon fill="#c9cccb" stroke="none" points="493,616 514,624 514,648 493,659" />
        <path d="M495 660l20-11" fill="none" />
        <Coil x={514} w={37} y0={630} y1={658} />
        <Coil x={585} w={18} y0={660} y1={688} />
        <ellipse cx="511" cy="659" rx="5" ry="2.500" fill="#3a3ae4" />
        <ellipse cx="546" cy="660" rx="4" ry="2.500" fill="#20209c" />
        <ellipse cx="599" cy="698" rx="5" ry="3" fill="#3a3ae4" />
        <polygon fill="#8c939d" points="495,660 602,705 602,720 495,676" />
        <polygon fill="#ab8f97" points="495,676 602,720 602,743 495,697" />
        <path d="M493 618v84M602 702v46" strokeWidth="2.500" fill="none" />
        {/* spacer blocks */}
        <polygon fill="#abadad" points="460,600 492,614 492,701 459,687" />
        <polygon fill="#abadad" points="603,660 637,675 637,763 603,749" />
        <polygon fill="#cbcecd" points="637,678 879,555 879,640 637,763" />
        {/* tan, red, grey and blue plates */}
        <polygon fill="#a98663" points="460,571 637,646 637,678 460,602" />
        <polygon fill="#d0a474" points="637,646 879,523 879,555 637,678" />
        <polygon fill="#ad5a60" points="460,539 637,615 637,646 460,571" />
        <polygon fill="#d1767a" points="637,615 879,493 879,523 637,646" />
        <polygon fill="#a3a5a5" points="460,518 637,593 637,615 460,539" />
        <polygon fill="#c8c9ca" points="637,593 879,471 879,493 637,615" />
        <polygon fill="#6485ab" points="460,430 637,505 637,593 460,518" />
        <polygon fill="#7ba5d0" points="637,505 879,400 879,471 637,593" />
        <path d="M637 505v258" strokeWidth="1.8" />
        {/* top clamp plate */}
        <polygon fill="#aaabab" points="439,402 659,497 659,524 439,428" />
        <polygon fill="#cdcfce" points="659,497 902,373 902,400 659,524" />
        <polygon fill="#fff" points="439,402 681,278 902,373 659,497" />
      </g>

      <g stroke="#000" strokeWidth="2">
        <ellipse cx="548" cy="516" rx="5" ry="7" fill="#c8e8f4" transform="rotate(-20 548 516)" />
        <ellipse cx="548" cy="593" rx="5" ry="7" fill="#ffb0b4" transform="rotate(-20 548 593)" />
      </g>
      <path d="M649 767l7 4m2 0l8-4" stroke="#000" strokeWidth="3" />
      <path d="M743 482l5-1M768 468l5-1" stroke="#000" strokeWidth="2" />

      {SCREWS.map(([x, y]) => (
        <g key={x}>
          <ellipse cx={x} cy={y} rx="13" ry="6.500" />
          <ellipse cx={x} cy={y + 0.5} rx="9" ry="4.200" fill="none" stroke="#18d820" strokeWidth="1.500" />
          <rect x={x - 2.5} y={y - 1.5} width="6" height="4" fill="#10a818" />
        </g>
      ))}

      {/* locating ring */}
      <g stroke="#000" strokeWidth="1.6">
        <path d="M610 378v9a60 29 0 00120 0v-9z" fill="#108468" />
        <ellipse cx="670" cy="378" rx="60" ry="29" fill="#12b48c" />
        <ellipse cx="670" cy="377" rx="43" ry="20" fill="#14745e" />
        <path d="M630 384.500a40 14 0 0180 0a43 20 0 01-80 0z" fill="#fff" />
      </g>
      {[[632, 361], [708, 393]].map(([x, y]) => (
        <g key={x}>
          <ellipse cx={x} cy={y} rx="7" ry="4" />
          <ellipse cx={x} cy={y + 1} rx="3" ry="1.500" fill="#3c4410" />
        </g>
      ))}

      {/* work coordinate system */}
      <path d="M670 443l2.500 18-2.500 28-2.500-28z" fill="#5070c8" />
      <path d="M673 494l20 6 18 11-16-4z" fill="#e08484" />
      <path d="M675 491l32-15-10 8z" fill="#9cd8a0" />
      <g fontFamily="Liberation Sans, sans-serif" fontSize="13">
        <text x="650" y="443" fill="#2050f0">ZC</text>
        <text x="695" y="525" fill="#d83c3c">XC</text>
      </g>
      <g fill="none" stroke="#f9a04c" strokeLinecap="round" strokeLinejoin="round" strokeWidth="3.500">
        <ellipse cx="711" cy="455" rx="31" ry="14" />
        <ellipse cx="711" cy="473" rx="31" ry="14" />
        <path d="M683 459l9-12-5 16 16-14-9 18 22-20-17 21 30-24-22 20 26-20" strokeWidth="4" />
        <path d="M692 446l22-3-16 8 28-6-12 8 24-4-14 8 16 0-22 8 14 0" strokeWidth="4" />
      </g>

      {/* view triad */}
      <g strokeLinejoin="round">
        <path d="M401 727l13-7 13 6v15l-13 9-13-8z" fill="#b4bcbe" stroke="#e0e4e4" />
        <path d="M401 727l13 6 13-7M414 733v17" fill="none" stroke="#e8ecec" />
        <path d="M401 718v24" stroke="#3058e0" strokeWidth="2" />
        <path d="M401 742l24 9" stroke="#d83030" strokeWidth="2" />
        <circle cx="401" cy="742" r="4" fill="#e4e4e4" />
      </g>
      <g fontFamily="Liberation Sans, sans-serif" fontSize="11">
        <text x="397" y="715" fill="#3058f0">Z</text>
        <text x="424" y="758" fill="#e03838">X</text>
      </g>
    </svg>
  );
}

function SketchBar() {
  return (
    <div className="flex h-9 shrink-0 items-stretch overflow-hidden border-b-2 border-t border-b-[#202020] border-t-white bg-linear-to-b from-[#e8e8ea] to-[#cacacc] pl-[149px]">
      <Grip />
      <Tool icon="sketch" label="草图" />
      <button type="button" disabled className="flex w-[82px] shrink-0 items-center gap-1 pl-1 text-[#909090]">
        <Icon name="finish" size={24} />
        <span className="whitespace-nowrap">完成草图</span>
      </button>
      <Tool icon="profile" label="轮廓" />
      <Tool icon="line" label="直线" />
      <Tool icon="arc" label="圆弧" />
      <Tool icon="circle" label="圆" />
      <Tool icon="fillet" label="圆角" />
      <Tool icon="chamfer" label="倒斜角" />
      <Tool icon="rect" label="矩形" />
      <Tool icon="spline" label="艺术样条" />
      <Tool icon="plus" label="点" />
      <Tool icon="offsetCrv" label="偏置曲线" />
      <Drop label="偏置曲线" />
      <Sep />
      <Tool icon="trimCrv" label="快速修剪" />
      <Tool icon="extendCrv" label="快速延伸" />
      <Sep />
      <Tool icon="dimension" label="自动判断尺寸" />
      <Drop label="自动判断尺寸" />
      <Sep />
      <Tool icon="perp" label="几何约束" />
      <Tool icon="showPerp" label="显示约束" />
      <Drop label="显示约束" />
      <More />
    </div>
  );
}

export default function App() {
  return (
    <div className="flex h-screen flex-col overflow-hidden bg-[#d4d4d6] font-['Noto_Sans','Noto_Sans_CJK_SC',sans-serif] text-xs text-black">
      <MenuBar />
      <StandardBar />
      <FeatureBar />
      <UtilityBar />
      <ShadingBar />
      <SelectionBar />
      <div className="flex h-[22px] shrink-0 items-center border-b border-[#505050] bg-[#d8d8da] font-bold" role="status">
        <span className="h-full w-[62%] border-r border-white" />
        <span className="pl-[3px]">体(0) 已选定</span>
      </div>
      <main className="flex min-h-0 flex-1">
        <ResourceBar />
        <Navigator />
        <div className="min-w-0 flex-1 bg-black"><MoldBase /></div>
      </main>
      <SketchBar />
    </div>
  );
}
